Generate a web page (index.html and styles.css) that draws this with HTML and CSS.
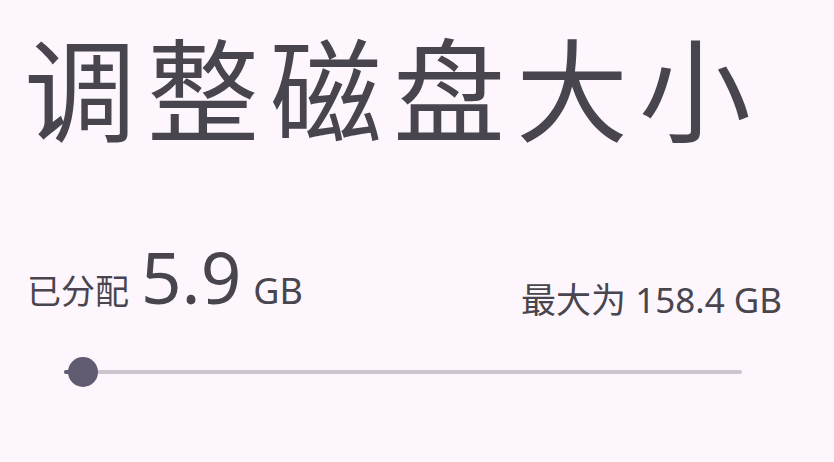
FILE: index.html
```html
<!DOCTYPE html>
<html lang="zh-CN">
<head>
    <meta charset="UTF-8">
    <meta name="viewport" content="width=device-width, initial-scale=1.0">
    <title>调整磁盘大小</title>
    <link rel="stylesheet" href="styles.css">
</head>
<body>
    <div class="screen">
        <h1 class="title">调整磁盘大小</h1>
        <div class="info-row">
            <div class="allocated">
                <span class="label">已分配</span>
                <span class="value">5.9</span>
                <span class="unit">GB</span>
            </div>
            <div class="max">最大为 158.4 GB</div>
        </div>
        <div class="slider">
            <div class="track">
                <div class="active" style="width: 1%"></div>
                <div class="thumb" style="left: 19px"></div>
            </div>
        </div>
    </div>
</body>
</html>
```

FILE: styles.css
```css
body {
    margin: 0;
    background-color: #fdf7fd;
    color: #49454e;
    font-family: "Noto Sans", "Noto Sans CJK SC", sans-serif;
}
.screen {
    width: 834px;
    height: 462px;
    padding-top: 29px;
    box-sizing: border-box;
}
.title {
    margin: 0;
    padding-left: 24px;
    font-family: "Noto Sans CJK SC", sans-serif;
    font-size: 112px;
    font-weight: 400;
    line-height: 1;
    letter-spacing: 11px;
}
.info-row {
    display: flex;
    justify-content: space-between;
    align-items: flex-end;
    padding: 0 52px 0 27px;
    margin-top: 100px;
}
.allocated {
    display: flex;
    align-items: baseline;
    gap: 12px;
    padding-bottom: 5px;
    line-height: 1;
}
.label {
    font-family: "Noto Sans CJK SC", sans-serif;
    font-size: 34px;
}
.value {
    font-size: 71px;
}
.unit {
    font-size: 36px;
}
.max {
    font-size: 35px;
    line-height: 1;
}
.slider {
    padding: 0 92px 0 64px;
    margin-top: 53px;
}
.track {
    position: relative;
    height: 4px;
    border-radius: 2px;
    background-color: #cbc5ce;
}
.active {
    height: 100%;
    background-color: #615b71;
    border-radius: 2px;
}
.thumb {
    position: absolute;
    top: -13px;
    width: 30px;
    height: 30px;
    margin-left: -15px;
    border-radius: 50%;
    background-color: #615b71;
}
```
